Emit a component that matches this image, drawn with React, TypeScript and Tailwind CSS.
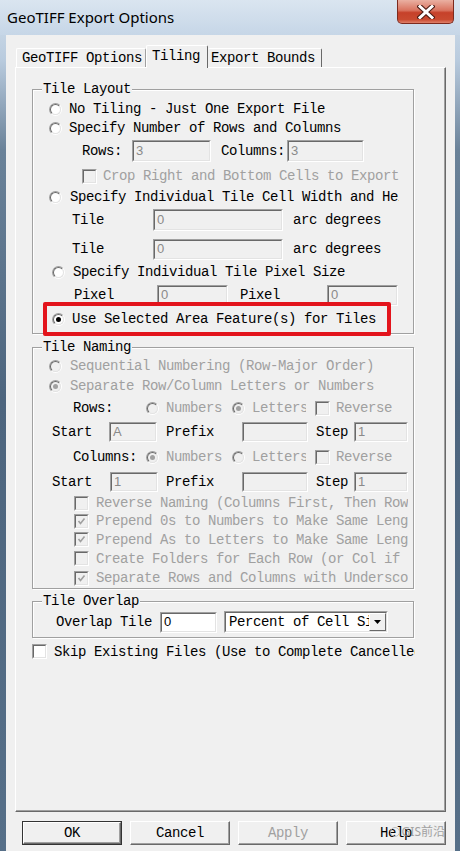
import clsx from "clsx";

const MONO = "font-['Liberation_Mono',monospace] text-[14px] tracking-[-0.4px] leading-[16px]";
const SUNK_OUT = "border border-t-[#a0a0a0] border-l-[#a0a0a0] border-r-white border-b-white";
const SUNK_IN = "border border-t-[#696969] border-l-[#696969] border-r-[#e3e3e3] border-b-[#e3e3e3]";

export default function App() {
  return (
    <div className="relative w-[460px] h-[851px] overflow-hidden bg-[linear-gradient(180deg,#d3e0ec_0px,#b9cbde_60px,#6a8299_150px,#4d657e_400px,#566f88_100%)]">
      {/* Title bar */}
      <div className="h-[35px] flex items-center pl-[7px] bg-[linear-gradient(180deg,#dae5f0,#c6d6e7)]">
        <span className="font-['Noto_Sans',sans-serif] text-[15px] text-black">GeoTIFF Export Options</span>
      </div>
      <CloseButton />

      {/* Client */}
      <div className="ml-[6px] w-[449px] h-[816px] bg-[#f0f0f0] px-[9px] pt-[10px] flex flex-col">
        {/* Tabs */}
        <div className={clsx("h-[22px] flex items-start pl-[1px] text-black", MONO)}>
          <div className="mt-[3px] h-[19px] w-[130px] pl-[5px] flex items-center border-l border-t border-r border-l-white border-t-white border-r-[#a0a0a0] rounded-t-[2px]">
            GeoTIFF Options
          </div>
          <div className="relative z-10 h-[23px] w-[62px] pl-[5px] pb-[3px] flex items-center bg-[#f0f0f0] border-l border-t border-r border-l-white border-t-white border-r-[#696969] rounded-t-[2px]">
            Tiling
          </div>
          <div className="mt-[3px] h-[19px] w-[114px] pl-[3px] flex items-center border-t border-r border-t-white border-r-[#696969] rounded-t-[2px]">
            Export Bounds
          </div>
        </div>

        {/* Tab panel */}
        <div className={clsx("h-[745px] pl-[16px] pt-[21px] flex flex-col border border-l-white border-t-white border-r-[#696969] border-b-[#696969] shadow-[inset_-1px_-1px_0_#a0a0a0] text-black", MONO)}>
          <TileLayout />
          <TileNaming />
          <TileOverlap />
          <div className="mt-[6px] h-[15px] flex items-center">
            <Check />
            <span className="ml-[7px] w-[361px] overflow-hidden whitespace-nowrap">
              Skip Existing Files (Use to Complete Cancelled Export)
            </span>
          </div>
        </div>

        {/* Buttons */}
        <div className={clsx("relative mt-[9px] pl-[7px] flex gap-[8px]", MONO)}>
          <Btn label="OK" def />
          <Btn label="Cancel" />
          <Btn label="Apply" disabled />
          <Btn label="Help" />
          <span className="absolute right-[1px] top-[3px] flex items-center gap-[2px] font-['Noto_Sans','Noto_Sans_CJK_SC',sans-serif] text-[12px] tracking-normal text-[#8e8e8e] opacity-80">
            <span className="w-[10px] h-[10px] rounded-full border border-[#b0b0b0]" />
            GIS前沿
          </span>
        </div>
      </div>
    </div>
  );
}

function CloseButton() {
  return (
    <div className="absolute top-0 right-[6px] w-[57px] h-[24px] rounded-b-[5px] border border-t-0 border-[#7d2a1e] bg-[linear-gradient(180deg,#eab0a2_0%,#d9735f_45%,#c6412a_55%,#c94a30_85%,#e0806a_100%)] flex items-center justify-center">
      <svg width="18" height="14" viewBox="0 0 18 14">
        <path d="M3 1.5 L15 12.5 M15 1.5 L3 12.5" stroke="#4b1a12" strokeWidth="5" strokeLinecap="square" />
        <path d="M3 1.5 L15 12.5 M15 1.5 L3 12.5" stroke="#ffffff" strokeWidth="3" strokeLinecap="square" />
      </svg>
    </div>
  );
}

function TileLayout() {
  return (
    <Group title="Tile Layout" className="h-[245px] pt-[9px]">
      <div className="h-[20px] pl-[16px] flex items-center">
        <Radio />
        <span className="ml-[7px]">No Tiling - Just One Export File</span>
      </div>
      <div className="h-[18px] pl-[16px] flex items-center">
        <Radio />
        <span className="ml-[7px]">Specify Number of Rows and Columns</span>
      </div>
      <div className="h-[28px] pl-[49px] flex items-center">
        <span className="w-[50px] shrink-0">Rows:</span>
        <Field className="w-[79px] h-[22px]" value="3" />
        <span className="ml-[10px] w-[66px] shrink-0">Columns:</span>
        <Field className="w-[77px] h-[22px]" value="3" />
      </div>
      <div className="h-[22px] pl-[49px] flex items-center">
        <Check disabled />
        <span className="ml-[6px] text-[#a0a0a0]">Crop Right and Bottom Cells to Export</span>
      </div>
      <div className="h-[20px] pl-[16px] flex items-center">
        <Radio />
        <span className="ml-[8px] w-[329px] overflow-hidden whitespace-nowrap">
          Specify Individual Tile Cell Width and Height
        </span>
      </div>
      <div className="h-[26px] pl-[39px] flex items-center">
        <span className="w-[81px] shrink-0">Tile</span>
        <Field className="w-[130px] h-[22px]" value="0" />
        <span className="ml-[10px]">arc degrees</span>
      </div>
      <div className="h-[32px] pl-[39px] flex items-center">
        <span className="w-[81px] shrink-0">Tile</span>
        <Field className="w-[130px] h-[21px]" value="0" />
        <span className="ml-[10px]">arc degrees</span>
      </div>
      <div className="h-[14px] pl-[19px] flex items-center">
        <Radio />
        <span className="ml-[8px]">Specify Individual Tile Pixel Size</span>
      </div>
      <div className="h-[32px] pl-[41px] flex items-center">
        <span className="w-[83px] shrink-0">Pixel</span>
        <Field className="w-[71px] h-[21px]" value="0" />
        <span className="ml-[12px] w-[87px] shrink-0">Pixel</span>
        <Field className="w-[71px] h-[21px]" value="0" />
      </div>
      <div className="h-[16px] pl-[19px] flex items-center">
        <Radio checked />
        <span className="ml-[7px]">Use Selected Area Feature(s) for Tiles</span>
      </div>
      {/* highlight drawn over the dialog */}
      <div className="absolute left-[10px] top-[212px] w-[348px] h-[34px] border-[4px] border-[#e3141c] rounded-[2px]" />
    </Group>
  );
}

function TileNaming() {
  const gray = "text-[#a0a0a0]";
  return (
    <Group title="Tile Naming" className="mt-[13px] h-[242px] pt-[8px]">
      <div className="h-[20px] pl-[16px] flex items-center">
        <Radio disabled />
        <span className={clsx("ml-[8px]", gray)}>Sequential Numbering (Row-Major Order)</span>
      </div>
      <div className="h-[20px] pl-[16px] flex items-center">
        <Radio checked disabled />
        <span className={clsx("ml-[8px]", gray)}>Separate Row/Column Letters or Numbers</span>
      </div>
      <div className="h-[24px] pl-[40px] flex items-center">
        <span className="w-[73px] shrink-0">Rows:</span>
        <Radio disabled />
        <span className={clsx("ml-[7px] w-[66px] shrink-0", gray)}>Numbers</span>
        <Radio checked disabled />
        <span className={clsx("ml-[7px] w-[54px] shrink-0 overflow-hidden whitespace-nowrap", gray)}>Letters</span>
        <span className="ml-[9px] flex"><Check disabled /></span>
        <span className={clsx("ml-[6px]", gray)}>Reverse</span>
      </div>
      <div className="h-[24px] pl-[19px] flex items-center">
        <span className="w-[57px] shrink-0">Start</span>
        <Field className="w-[48px] h-[20px]" value="A" />
        <span className="ml-[9px] w-[76px] shrink-0">Prefix</span>
        <Field className="w-[66px] h-[20px]" />
        <span className="ml-[8px] w-[38px] shrink-0">Step</span>
        <Field className="w-[54px] h-[20px]" value="1" />
      </div>
      <div className="h-[26px] pl-[40px] flex items-center">
        <span className="w-[73px] shrink-0">Columns:</span>
        <Radio checked disabled />
        <span className={clsx("ml-[7px] w-[66px] shrink-0", gray)}>Numbers</span>
        <Radio disabled />
        <span className={clsx("ml-[7px] w-[54px] shrink-0 overflow-hidden whitespace-nowrap", gray)}>Letters</span>
        <span className="ml-[9px] flex"><Check disabled /></span>
        <span className={clsx("ml-[6px]", gray)}>Reverse</span>
      </div>
      <div className="h-[24px] pl-[19px] flex items-center">
        <span className="w-[58px] shrink-0">Start</span>
        <Field className="w-[48px] h-[20px]" value="1" />
        <span className="ml-[8px] w-[76px] shrink-0">Prefix</span>
        <Field className="w-[66px] h-[20px]" />
        <span className="ml-[8px] w-[38px] shrink-0">Step</span>
        <Field className="w-[54px] h-[20px]" value="1" />
      </div>
      <NamingCheck text="Reverse Naming (Columns First, Then Rows)" h="h-[18px]" />
      <NamingCheck text="Prepend 0s to Numbers to Make Same Length" h="h-[18px]" checked />
      <NamingCheck text="Prepend As to Letters to Make Same Length" h="h-[19px]" checked />
      <NamingCheck text="Create Folders for Each Row (or Col if Reversed)" h="h-[19px]" />
      <NamingCheck text="Separate Rows and Columns with Underscore" h="h-[20px]" checked />
    </Group>
  );
}

function NamingCheck({ text, h, checked = false }: { text: string; h: string; checked?: boolean }) {
  return (
    <div className={clsx("pl-[41px] flex items-center", h)}>
      <Check checked={checked} disabled />
      <span className="ml-[7px] w-[312px] overflow-hidden whitespace-nowrap text-[#a0a0a0]">{text}</span>
    </div>
  );
}

function TileOverlap() {
  return (
    <Group title="Tile Overlap" className="mt-[12px] h-[37px] pt-[9px]">
      <div className="h-[22px] pl-[23px] flex items-center">
        <span className="w-[104px] shrink-0">Overlap Tile</span>
        <Field className="w-[57px] h-[21px]" value="0" white />
        <span className={clsx("ml-[7px] w-[164px] h-[22px] flex", SUNK_OUT)}>
          <span className={clsx("flex-1 min-w-0 flex bg-white", SUNK_IN)}>
            <span className="flex-1 min-w-0 pl-[3px] flex items-center overflow-hidden whitespace-nowrap">Percent of Cell Size</span>
            <span className="w-[17px] shrink-0 h-full flex items-center justify-center bg-[#f0f0f0] border border-t-white border-l-white border-r-[#696969] border-b-[#696969]">
              <svg width="7" height="4" viewBox="0 0 7 4">
                <path d="M0 0 H7 L3.5 4 Z" fill="#000" />
              </svg>
            </span>
          </span>
        </span>
      </div>
    </Group>
  );
}

// ── Controls ─────────────────────────────────────────────────────────────────

function Group({ title, className, children }: { title: string; className?: string; children: React.ReactNode }) {
  return (
    <div className={clsx("relative w-[382px] shrink-0 border border-[#a0a0a0] shadow-[inset_1px_1px_0_#fff,1px_1px_0_#fff]", className)}>
      <span className="absolute left-[9px] -top-[9px] px-[1px] bg-[#f0f0f0] leading-[16px]">{title}</span>
      {children}
    </div>
  );
}

function Radio({ checked = false, disabled = false }: { checked?: boolean; disabled?: boolean }) {
  return (
    <span className="relative inline-block w-[13px] h-[13px] shrink-0 rounded-full border border-t-[#a0a0a0] border-l-[#a0a0a0] border-r-white border-b-white">
      <span className={clsx("block w-full h-full rounded-full", SUNK_IN, disabled ? "bg-[#f0f0f0]" : "bg-white")} />
      {checked && (
        <span className={clsx("absolute left-[3px] top-[3px] w-[5px] h-[5px] rounded-full", disabled ? "bg-[#a0a0a0]" : "bg-black")} />
      )}
    </span>
  );
}

function Check({ checked = false, disabled = false }: { checked?: boolean; disabled?: boolean }) {
  return (
    <span className={clsx("relative inline-block w-[15px] h-[15px] shrink-0", SUNK_OUT)}>
      <span className={clsx("block w-full h-full", SUNK_IN, disabled ? "bg-[#f0f0f0]" : "bg-white")} />
      {checked && (
        <svg className="absolute left-[2px] top-[2px]" width="9" height="9" viewBox="0 0 9 9">
          <path d="M1.5 4 L3.5 6.5 L7.5 1.5" stroke={disabled ? "#a0a0a0" : "#000"} strokeWidth="1.6" fill="none" />
        </svg>
      )}
    </span>
  );
}

function Field({ className, value = "", white = false }: { className: string; value?: string; white?: boolean }) {
  return (
    <span className={clsx("flex shrink-0", SUNK_OUT, className)}>
      <span
        className={clsx(
          "flex items-center w-full h-full pl-[2px] font-['Liberation_Sans',sans-serif] text-[13px] tracking-normal",
          SUNK_IN,
          white ? "bg-white text-black" : "bg-[#f0f0f0] text-[#8a8a8a]"
        )}
      >
        {value}
      </span>
    </span>
  );
}

function Btn({ label, def = false, disabled = false }: { label: string; def?: boolean; disabled?: boolean }) {
  return (
    <div className={clsx("w-[100px] h-[24px] flex", def && "border border-[#333]")}>
      <div
        className={clsx(
          "flex-1 flex items-center justify-center bg-[#f0f0f0] border border-t-white border-l-white border-r-[#696969] border-b-[#696969] shadow-[inset_-1px_-1px_0_#a0a0a0]",
          disabled ? "text-[#a0a0a0]" : "text-black"
        )}
      >
        {label}
      </div>
    </div>
  );
}
